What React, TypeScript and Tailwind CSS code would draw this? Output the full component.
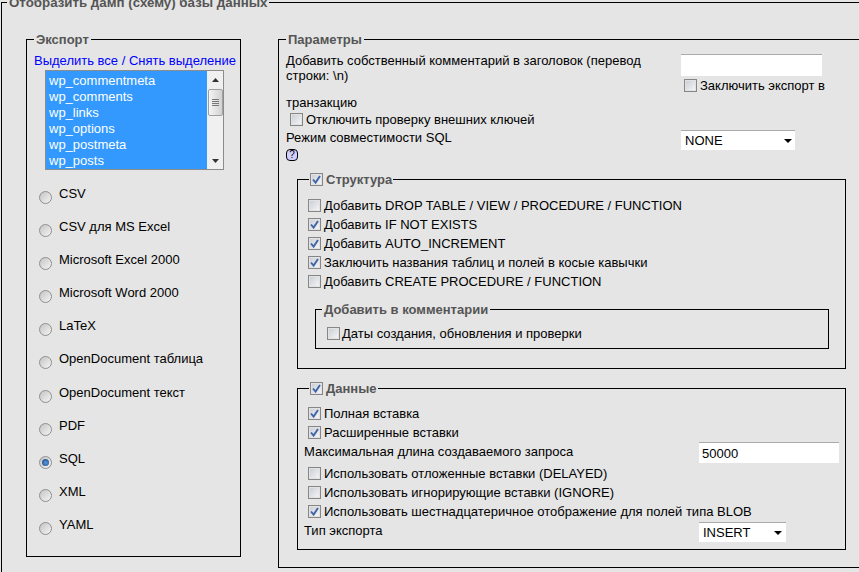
import React from "react";

function Check({ on = false }: { on?: boolean }) {
  return (
    <span className="flex h-[13px] w-[13px] shrink-0 items-center justify-center border border-[#868686] bg-gradient-to-br from-[#c8ccd2] to-[#f7f8fa] shadow-[inset_0_0_0_1px_#e2e2e2]">
      {on && (
        <svg width="9" height="9" viewBox="0 0 9 9">
          <path d="M1 4.5 L3.6 7.6 L8 1" fill="none" stroke="#3f64a6" strokeWidth="1.9" />
        </svg>
      )}
    </span>
  );
}

function Radio({ on = false }: { on?: boolean }) {
  return (
    <span className="flex h-[13px] w-[13px] shrink-0 items-center justify-center rounded-full border border-[#8f8f8f] bg-gradient-to-br from-[#c4c4c4] to-[#f5f5f5]">
      {on && <span className="h-[7px] w-[7px] rounded-full bg-[radial-gradient(circle_at_55%_55%,#5b9ddb,#143a78)]" />}
    </span>
  );
}

function Row({ on, text }: { on?: boolean; text: string }) {
  return (
    <div className="flex h-[19px] items-center gap-[3px] pl-[10px]">
      <Check on={on} />
      <span>{text}</span>
    </div>
  );
}

function Tri() {
  return (
    <svg width="8" height="4" viewBox="0 0 8 4" className="shrink-0">
      <path d="M0 0 H8 L4 4 Z" fill="#000" />
    </svg>
  );
}

const tables = ["wp_commentmeta", "wp_comments", "wp_links", "wp_options", "wp_postmeta", "wp_posts"];
const formats = [
  "CSV",
  "CSV для MS Excel",
  "Microsoft Excel 2000",
  "Microsoft Word 2000",
  "LaTeX",
  "OpenDocument таблица",
  "OpenDocument текст",
  "PDF",
  "SQL",
  "XML",
  "YAML",
];

export default function App() {
  return (
    <div className="h-[572px] w-[859px] overflow-hidden bg-[#e5e5e5] font-['Liberation_Sans',Arial,sans-serif] text-[13px] leading-[15px] text-black">
      <fieldset className="-mt-[5px] ml-[1px] w-[1000px] border border-black pb-[20px] pl-[24px] pt-[22px]">
        <legend className="ml-[-19px] px-[2px] text-[13.3px] font-bold text-[#555]">Отобразить дамп (схему) базы данных</legend>
        <div className="flex items-start gap-[37px]">
          <fieldset className="h-[525px] w-[215px] shrink-0 border border-black pl-[7px]">
            <legend className="px-[2px] font-bold text-[#555]">Экспорт</legend>
            <div className="mt-[6px] whitespace-nowrap text-[#0000ff]">Выделить все / Снять выделение</div>
            <div className="ml-[11px] mt-[2px] flex h-[100px] w-[179px] border border-[#8c8c8c] bg-[#f0f0f0]">
              <div className="w-[161px] bg-[#3399ff] pl-[3px] pt-[2px] text-white">
                {tables.map((t) => (
                  <div key={t} className="h-[16px]">{t}</div>
                ))}
              </div>
              <div className="flex flex-1 flex-col items-center pt-[7px]">
                <svg width="7" height="4" viewBox="0 0 7 4"><path d="M0 4 L3.5 0 L7 4 Z" fill="#333" /></svg>
                <div className="mt-[7px] flex h-[27px] w-[15px] flex-col items-center justify-center gap-[1px] rounded-[2px] border border-[#a0a0a0] bg-gradient-to-r from-[#f4f4f4] to-[#d2d2d2]">
                  <span className="h-px w-[7px] bg-[#777]" />
                  <span className="h-px w-[7px] bg-[#777]" />
                  <span className="h-px w-[7px] bg-[#777]" />
                  <span className="h-px w-[7px] bg-[#777]" />
                </div>
                <svg width="7" height="4" viewBox="0 0 7 4" className="mt-[43px]"><path d="M0 0 H7 L3.5 4 Z" fill="#333" /></svg>
              </div>
            </div>
            <div className="mt-[16px]">
              {formats.map((f) => (
                <div key={f} className="flex h-[33.1px] items-start pl-[5px]">
                  <span className="mt-[5px]"><Radio on={f === "SQL"} /></span>
                  <span className="ml-[7px]">{f}</span>
                </div>
              ))}
            </div>
          </fieldset>

          <fieldset className="h-[536px] w-[700px] shrink-0 border border-black pl-[7px]">
            <legend className="px-[2px] font-bold text-[#555]">Параметры</legend>
            <div className="mt-[5px] flex h-[41px] items-start">
              <div className="mt-[1px] w-[360px]">Добавить собственный комментарий в заголовок (перевод строки: \n)</div>
              <div className="ml-[35px] mt-[2px]">
                <div className="h-[22px] w-[141px] border-t border-t-[#aaa] bg-white" />
                <div className="ml-[3px] mt-[2px] flex items-center gap-[3px] whitespace-nowrap">
                  <Check />
                  <span>Заключить экспорт в</span>
                </div>
              </div>
            </div>
            <div className="mt-[2px] h-[16px]">транзакцию</div>
            <div className="flex h-[17px] items-center gap-[3px] pl-[4px]">
              <Check />
              <span>Отключить проверку внешних ключей</span>
            </div>
            <div className="flex h-[20px] items-start">
              <span className="mt-[2px] w-[395px]">Режим совместимости SQL</span>
              <div className="mt-[2px] flex h-[20px] w-[114px] shrink-0 items-center justify-between border-t border-t-[#aaa] bg-white pl-[4px] pr-[3px]">
                <span>NONE</span>
                <Tri />
              </div>
            </div>
            <div className="mt-[1px] flex h-[12px] w-[12px] items-center justify-center rounded-[4px] border border-black bg-[#d0d0ff] text-[10px] leading-none">?</div>

            <fieldset className="ml-[11px] mt-[11px] h-[197px] w-[549px] border border-black">
              <legend className="ml-[11px] flex items-center gap-[3px] px-[1px] font-bold text-[#555]">
                <Check on />
                <span>Структура</span>
              </legend>
              <div className="mt-[9px]">
                <Row text="Добавить DROP TABLE / VIEW / PROCEDURE / FUNCTION" />
                <Row on text="Добавить IF NOT EXISTS" />
                <Row on text="Добавить AUTO_INCREMENT" />
                <Row on text="Заключить названия таблиц и полей в косые кавычки" />
                <Row text="Добавить CREATE PROCEDURE / FUNCTION" />
              </div>
              <fieldset className="ml-[17px] mt-[11px] h-[47px] w-[514px] border border-black">
                <legend className="ml-[6px] px-[2px] font-bold text-[#555]">Добавить в комментарии</legend>
                <div className="ml-[11px] mt-[9px] flex items-center gap-[2px]">
                  <Check />
                  <span>Даты создания, обновления и проверки</span>
                </div>
              </fieldset>
            </fieldset>

            <fieldset className="ml-[11px] mt-[12px] h-[169px] w-[549px] border border-black">
              <legend className="ml-[11px] flex items-center gap-[3px] px-[1px] font-bold text-[#555]">
                <Check on />
                <span>Данные</span>
              </legend>
              <div className="mt-[8px]">
                <Row on text="Полная вставка" />
                <Row on text="Расширенные вставки" />
                <div className="flex h-[22px] items-start pl-[6px]">
                  <span className="mt-[2px] w-[395px]">Максимальная длина создаваемого запроса</span>
                  <div className="flex h-[21px] w-[140px] items-center border-t border-t-[#aaa] bg-white pl-[3px]">50000</div>
                </div>
                <Row text="Использовать отложенные вставки (DELAYED)" />
                <Row text="Использовать игнорирующие вставки (IGNORE)" />
                <Row on text="Использовать шестнадцатеричное отображение для полей типа BLOB" />
                <div className="flex h-[20px] items-start pl-[6px]">
                  <span className="mt-[2px] w-[395px]">Тип экспорта</span>
                  <div className="mt-[1px] flex h-[20px] w-[87px] items-center justify-between border-t border-t-[#aaa] bg-white pl-[4px] pr-[4px]">
                    <span>INSERT</span>
                    <Tri />
                  </div>
                </div>
              </div>
            </fieldset>
          </fieldset>
        </div>
      </fieldset>
    </div>
  );
}
